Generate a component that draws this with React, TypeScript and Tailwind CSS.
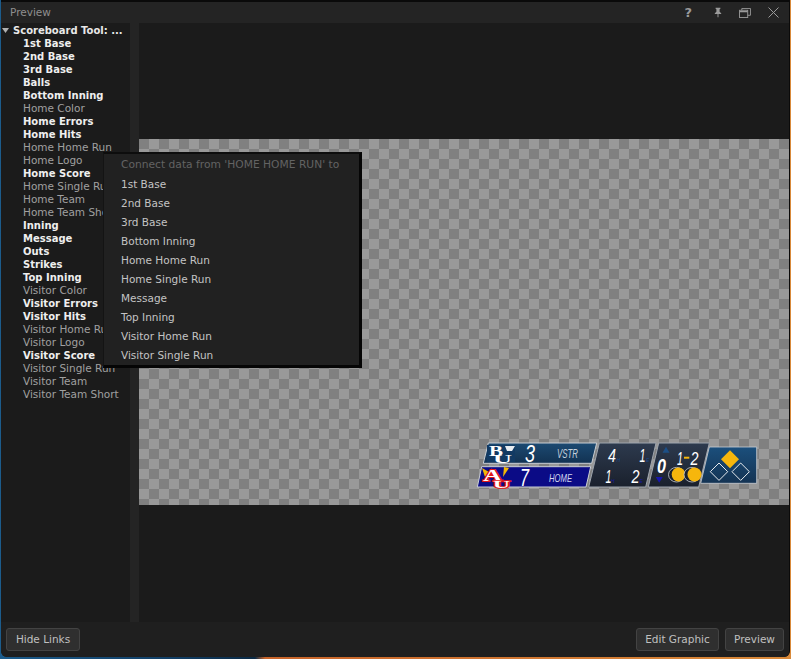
const fields = [
  { name: "1st Base", linked: true },
  { name: "2nd Base", linked: true },
  { name: "3rd Base", linked: true },
  { name: "Balls", linked: true },
  { name: "Bottom Inning", linked: true },
  { name: "Home Color", linked: false },
  { name: "Home Errors", linked: true },
  { name: "Home Hits", linked: true },
  { name: "Home Home Run", linked: false },
  { name: "Home Logo", linked: false },
  { name: "Home Score", linked: true },
  { name: "Home Single Run", linked: false },
  { name: "Home Team", linked: false },
  { name: "Home Team Short", linked: false },
  { name: "Inning", linked: true },
  { name: "Message", linked: true },
  { name: "Outs", linked: true },
  { name: "Strikes", linked: true },
  { name: "Top Inning", linked: true },
  { name: "Visitor Color", linked: false },
  { name: "Visitor Errors", linked: true },
  { name: "Visitor Hits", linked: true },
  { name: "Visitor Home Run", linked: false },
  { name: "Visitor Logo", linked: false },
  { name: "Visitor Score", linked: true },
  { name: "Visitor Single Run", linked: false },
  { name: "Visitor Team", linked: false },
  { name: "Visitor Team Short", linked: false },
];

const targets = [
  "1st Base",
  "2nd Base",
  "3rd Base",
  "Bottom Inning",
  "Home Home Run",
  "Home Single Run",
  "Message",
  "Top Inning",
  "Visitor Home Run",
  "Visitor Single Run",
];

function Scoreboard() {
  const sans = "font-['Liberation_Sans',sans-serif] italic";
  const serif = "font-['Liberation_Serif',serif] font-bold";
  return (
    <svg width="284" height="50" viewBox="0 0 284 50" className="block">
      <defs>
        <linearGradient id="vstr" x1="0" y1="0" x2="0" y2="1">
          <stop offset="0" stopColor="#1c4a72" />
          <stop offset="1" stopColor="#123252" />
        </linearGradient>
        <linearGradient id="slate" x1="0" y1="0" x2="0" y2="1">
          <stop offset="0" stopColor="#2d3a4e" />
          <stop offset="1" stopColor="#1a202c" />
        </linearGradient>
        <linearGradient id="bases" x1="0" y1="0" x2="0" y2="1">
          <stop offset="0" stopColor="#1b4f7c" />
          <stop offset="1" stopColor="#143353" />
        </linearGradient>
      </defs>

      {/* team rows */}
      <polygon points="13.3,2 121.7,2 116.7,22.3 8.3,22.3" fill="url(#vstr)" stroke="#c9ced4" strokeWidth="1" />
      <polygon points="6.7,25.7 115.7,25.7 111,46 2.3,46" fill="#0b0b86" stroke="#c9ced4" strokeWidth="1" />

      {/* visitor logo */}
      <rect x="12" y="4" width="28" height="17" fill="#123a63" />
      <polygon points="30,5 40,5 37,10 32,10" fill="#e8edf2" />
      <text x="14" y="15" fontSize="15" textLength="14" lengthAdjust="spacingAndGlyphs" fill="#fff" className={serif}>B</text>
      <text x="18" y="22" fontSize="12" textLength="19" lengthAdjust="spacingAndGlyphs" fill="#fff" className={serif}>U</text>

      {/* home logo */}
      <polygon points="7,27 14,31 10,36" fill="#f2b705" />
      <polygon points="29,26 34,27 28,36" fill="#f2b705" />
      <text x="8" y="40" fontSize="17" textLength="19" lengthAdjust="spacingAndGlyphs" fill="#fff" stroke="#e01818" strokeWidth="2" paintOrder="stroke" className={serif}>A</text>
      <text x="18" y="46.5" fontSize="10" textLength="17" lengthAdjust="spacingAndGlyphs" fill="#fff" stroke="#e01818" strokeWidth="1.6" paintOrder="stroke" className={serif}>U</text>

      <text x="50" y="20.7" fontSize="24" textLength="10" lengthAdjust="spacingAndGlyphs" fill="#fff" className={sans}>3</text>
      <text x="45" y="45" fontSize="24" textLength="9" lengthAdjust="spacingAndGlyphs" fill="#fff" className={sans}>7</text>
      <text x="82" y="17" fontSize="12" textLength="21" lengthAdjust="spacingAndGlyphs" fill="#c8d2de" className={sans}>VSTR</text>
      <text x="74" y="41" fontSize="11" textLength="23" lengthAdjust="spacingAndGlyphs" fill="#d5d8ee" className={sans}>HOME</text>

      {/* hits and errors */}
      <polygon points="124.3,2 181,2 170.7,46 113.7,46" fill="url(#slate)" stroke="#9ea5ae" strokeWidth="1" />
      <text x="133" y="20.7" fontSize="19" textLength="8" lengthAdjust="spacingAndGlyphs" fill="#fff" className={sans}>4</text>
      <text x="141.5" y="20.7" fontSize="5" fill="#1c4a8a" className={sans}>H</text>
      <text x="164.5" y="20.7" fontSize="19" textLength="6" lengthAdjust="spacingAndGlyphs" fill="#fff" className={sans}>1</text>
      <text x="171" y="20.7" fontSize="5" fill="#1c4a8a" className={sans}>E</text>
      <text x="130.5" y="41.7" fontSize="19" textLength="6" lengthAdjust="spacingAndGlyphs" fill="#fff" className={sans}>1</text>
      <text x="136" y="41.7" fontSize="5" fill="#1a1a9a" className={sans}>H</text>
      <text x="156.5" y="41.7" fontSize="19" textLength="8" lengthAdjust="spacingAndGlyphs" fill="#fff" className={sans}>2</text>
      <text x="164.5" y="41.7" fontSize="5" fill="#1a1a9a" className={sans}>E</text>

      {/* inning and count */}
      <polygon points="183.7,2 234.3,2 223.7,46 173.3,46" fill="url(#slate)" stroke="#9ea5ae" strokeWidth="1" />
      <polygon points="191,5.7 194.5,11.7 187.5,11.7" fill="#1c4f86" />
      <polygon points="180.7,36 187.7,36 184.2,41.7" fill="#1717b0" />
      <text x="182" y="32" fontSize="21" fontWeight="700" textLength="9" lengthAdjust="spacingAndGlyphs" fill="#fff" className={sans}>0</text>
      <text x="202" y="24" fontSize="19" textLength="6" lengthAdjust="spacingAndGlyphs" fill="#fff" className={sans}>1</text>
      <rect x="209" y="15.7" width="5.3" height="2" fill="#f6b60c" />
      <text x="215.5" y="24" fontSize="19" textLength="8" lengthAdjust="spacingAndGlyphs" fill="#fff" className={sans}>2</text>
      <ellipse cx="201.5" cy="33.7" rx="8" ry="7.3" fill="#1a202c" stroke="#c9ced4" strokeWidth="0.8" />
      <ellipse cx="203.5" cy="33.5" rx="6.8" ry="7" fill="#f6b60c" />
      <ellipse cx="217" cy="33.7" rx="8" ry="7.3" fill="#1a202c" stroke="#c9ced4" strokeWidth="0.8" />
      <ellipse cx="219.5" cy="33.5" rx="7" ry="7" fill="#f6b60c" />

      {/* bases */}
      <polygon points="234.3,6 281.7,6 281.7,42.3 225.7,42.3" fill="url(#bases)" stroke="#c9ced4" strokeWidth="0.8" />
      <polygon points="255,9.3 264,18.3 255,27.3 246,18.3" fill="#f6b60c" />
      <polygon points="244,22 252.7,30.7 244,39.4 235.3,30.7" fill="none" stroke="#e6eaee" strokeWidth="1" />
      <polygon points="265.7,22 274.4,30.7 265.7,39.4 257,30.7" fill="none" stroke="#e6eaee" strokeWidth="1" />
    </svg>
  );
}

export default function App() {
  return (
    <div className="relative w-[791px] h-[659px] overflow-hidden bg-[linear-gradient(90deg,#1c5c8c_0,#123f66_170px,#0b2a45_255px,#c8642a_265px,#d98a3a_100%)] font-['DejaVu_Sans',sans-serif] text-[10.5px]">
      <div className="ml-px w-[789px] h-[657px] flex flex-col overflow-hidden rounded-b-[6px] bg-[#1f1f1f] border-t-2 border-r border-[#0a0a0a]">
        {/* title bar */}
        <div className="h-[21px] shrink-0 flex items-center justify-between pl-[9px] pr-[10px] bg-[#242424]">
          <span className="text-[#8f8f8f]">Preview</span>
          <div className="flex items-center text-[#9a9a9a]">
            <span className="font-bold text-[13px] leading-none mr-[22px]">?</span>
            <svg width="8" height="11" viewBox="0 0 10 12" fill="#9a9a9a" className="mr-[17px]">
              <path d="M2 0h6v1.2L7 2v3l2 2v1H5.6v4h-1.2V8H1V7l2-2V2L2 1.2z" />
            </svg>
            <svg width="12" height="10" viewBox="0 0 13 11" fill="none" stroke="#9a9a9a" className="mr-[17px]">
              <rect x="0.5" y="2.5" width="9" height="8" />
              <path d="M3 2.5V0.5H12.5V8H9.5" />
              <path d="M0.5 4h9" strokeWidth="1.5" />
            </svg>
            <svg width="11" height="11" viewBox="0 0 11 11" stroke="#9a9a9a" strokeWidth="1">
              <path d="M0.5 0.5L10.5 10.5M10.5 0.5L0.5 10.5" />
            </svg>
          </div>
        </div>

        {/* body */}
        <div className="h-[599px] shrink-0 flex">
          <div className="w-[129px] shrink-0 bg-[#1b1b1b] pt-[1px] leading-[13px] overflow-hidden whitespace-nowrap">
            <div className="flex items-center font-bold text-[10px] text-[#e8e8e8] h-[13px] pl-[1px]">
              <svg width="7" height="5" viewBox="0 0 7 5" className="mr-[4px] shrink-0" fill="#b0b0b0">
                <path d="M0 0h7L3.5 5z" />
              </svg>
              Scoreboard Tool: ...
            </div>
            {fields.map((f) => (
              <div
                key={f.name}
                className={f.linked ? "h-[13px] pl-[22px] font-bold text-[10px] text-[#efefef]" : "h-[13px] pl-[22px] text-[#a0a0a0]"}
              >
                {f.name}
              </div>
            ))}
          </div>
          <div className="w-[9px] shrink-0 bg-[#242424]" />
          <div className="flex-1 bg-[#1b1b1b] flex flex-col pt-[116px]">
            <div className="h-[366px] flex items-end justify-end pr-[30px] pb-[14px] bg-[conic-gradient(#999_25%,#808080_0_50%,#999_0_75%,#808080_0)] bg-[length:20px_20px]">
              <Scoreboard />
            </div>
          </div>
        </div>

        {/* footer */}
        <div className="flex-1 flex items-start justify-between pl-[5px] pr-[5px] pt-[6px] text-[#c0c0c0] bg-[#1f1f1f]">
          <button className="h-[23px] w-[74px] rounded-[3px] bg-[#2f2f2f] border border-[#434343]">Hide Links</button>
          <div className="flex gap-[6px]">
            <button className="h-[23px] w-[83px] rounded-[3px] bg-[#2f2f2f] border border-[#434343]">Edit Graphic</button>
            <button className="h-[23px] w-[59px] rounded-[3px] bg-[#2f2f2f] border border-[#434343]">Preview</button>
          </div>
        </div>
      </div>

      {/* context menu */}
      <div className="absolute left-[103px] top-[152px] w-[259px] h-[216px] bg-[#212121] border-r-[3px] border-b-[3px] border-[#050505] border-t-2 border-l border-t-[#0d0d0d] border-l-[#141414] pl-[17px] text-[#c4c4c4]">
        <div className="h-[19px] leading-[22px] text-[10.7px] text-[#636363]">Connect data from 'HOME HOME RUN' to</div>
        {targets.map((t) => (
          <div key={t} className="h-[19px] leading-[22px]">{t}</div>
        ))}
      </div>
    </div>
  );
}
